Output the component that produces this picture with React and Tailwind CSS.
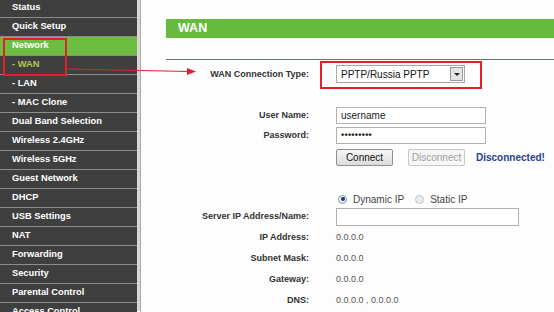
import React from "react";

const menu = [
  { label: "Status" },
  { label: "Quick Setup" },
  { label: "Network", active: true },
  { label: "- WAN", sub: true, current: true },
  { label: "- LAN", sub: true },
  { label: "- MAC Clone", sub: true },
  { label: "Dual Band Selection" },
  { label: "Wireless 2.4GHz" },
  { label: "Wireless 5GHz" },
  { label: "Guest Network" },
  { label: "DHCP" },
  { label: "USB Settings" },
  { label: "NAT" },
  { label: "Forwarding" },
  { label: "Security" },
  { label: "Parental Control" },
  { label: "Access Control" },
];

function Row({ label, children, className = "" }) {
  return (
    <div className={`flex items-center ${className}`}>
      <div className="w-[143px] shrink-0 text-right text-[9px] font-bold text-[#333]">{label}</div>
      <div className="ml-[27px] flex items-center">{children}</div>
    </div>
  );
}

function Radio({ checked }) {
  return (
    <span
      className={`flex h-[9px] w-[9px] items-center justify-center rounded-full border ${
        checked ? "border-[#8a9bb0] bg-[#e8eef5]" : "border-[#c4c4c4] bg-[#ececec]"
      }`}
    >
      {checked && <span className="h-[4px] w-[4px] rounded-full bg-[#1d3a70]" />}
    </span>
  );
}

export default function App() {
  return (
    <div
      className="relative flex h-[312px] w-[554px] overflow-hidden bg-[#fdfdfd]"
      style={{ fontFamily: '"Liberation Sans", Arial, sans-serif' }}
    >
      {/* left menu */}
      <div className="h-full shrink-0 border-r border-[#a9a9a9]">
        <div className="h-full w-[140px] border-r-[3px] border-[#d6d6d6] bg-[#3f3f3f]">
          <div className="-mt-[1px]">
            {menu.map((m) => (
              <div
                key={m.label}
                className={`flex h-[19px] items-center border-b border-[#8d8d8d] pl-[12px] text-[9.3px] font-bold ${
                  m.active ? "bg-[#6cbd40] text-white" : "bg-[#3f3f3f]"
                } ${m.current ? "text-[#b7c84a]" : m.active ? "" : "text-white"}`}
              >
                {m.label}
              </div>
            ))}
          </div>
        </div>
      </div>

      {/* content */}
      <div className="flex-1 pl-[25px] pt-[19px]">
        <div className="flex h-[19px] items-center bg-[#67bb3c] pl-[12px] text-[12.5px] font-bold text-white">WAN</div>
        <div className="mt-[21px] h-[1px] bg-[#65756f]" />

        <Row label="WAN Connection Type:" className="mt-[1px]">
          <div className="-ml-[16px] border-2 border-[#e2202b] pb-[4px] pl-[14px] pr-[15px] pt-[2px]">
            <div className="flex h-[18px] w-[129px] items-center border border-[#a8a8a8] bg-white pl-[4px] text-[10px] text-[#111]">
              <span className="flex-1">PPTP/Russia PPTP</span>
              <span className="mr-[1px] flex h-[14px] w-[13px] items-center justify-center border border-[#9a9a9a] bg-[#e4e4e4]">
                <span className="h-0 w-0 border-x-[3px] border-t-[3px] border-x-transparent border-t-[#222]" />
              </span>
            </div>
          </div>
        </Row>

        <Row label="User Name:" className="mt-[18px] h-[17px]">
          <div className="flex h-[17px] w-[150px] items-center border border-[#b0b0b0] bg-white pl-[4px] text-[10px] text-[#222]">
            username
          </div>
        </Row>
        <Row label="Password:" className="mt-[3px] h-[17px]">
          <div className="flex h-[17px] w-[150px] items-center border border-[#b0b0b0] bg-white pl-[4px] text-[9px] font-bold tracking-[0.3px] text-[#222]">
            •••••••••
          </div>
        </Row>
        <Row label="" className="mt-[5px] h-[17px]">
          <div className="flex h-[17px] w-[57px] items-center justify-center rounded-[2px] border border-[#8e8e8e] bg-gradient-to-b from-[#f6f6f6] to-[#dcdcdc] text-[10px] text-[#111]">
            Connect
          </div>
          <div className="ml-[15px] flex h-[17px] w-[57px] items-center justify-center rounded-[2px] border border-[#c8c8c8] bg-[#f7f7f7] text-[10px] text-[#9c9c9c]">
            Disconnect
          </div>
          <span className="ml-[11px] text-[10px] font-bold text-[#1f3f8c]">Disconnected!</span>
        </Row>

        <Row label="" className="mt-[27px] h-[12px]">
          <div className="ml-[2px] flex items-center text-[10px] text-[#444]">
            <Radio checked />
            <span className="ml-[6px]">Dynamic IP</span>
            <span className="ml-[11px]">
              <Radio />
            </span>
            <span className="ml-[6px]">Static IP</span>
          </div>
        </Row>
        <Row label="Server IP Address/Name:" className="mt-[3px] h-[18px]">
          <div className="h-[18px] w-[183px] border border-[#b0b0b0] bg-white" />
        </Row>

        <Row label="IP Address:" className="mt-[1px] h-[21px]">
          <span className="text-[9px] text-[#555]">0.0.0.0</span>
        </Row>
        <Row label="Subnet Mask:" className="h-[21px]">
          <span className="text-[9px] text-[#555]">0.0.0.0</span>
        </Row>
        <Row label="Gateway:" className="h-[21px]">
          <span className="text-[9px] text-[#555]">0.0.0.0</span>
        </Row>
        <Row label="DNS:" className="h-[21px]">
          <span className="text-[9px] text-[#555]">0.0.0.0 , 0.0.0.0</span>
        </Row>
      </div>

      {/* annotation: red box over Network / - WAN */}
      <div className="pointer-events-none absolute left-[3px] top-[38px] h-[38px] w-[64px] border-2 border-[#e2202b]" />

      {/* annotation: arrow */}
      <svg className="pointer-events-none absolute left-0 top-0" width="554" height="312">
        <line x1="67" y1="69" x2="189" y2="71.5" stroke="#e2202b" strokeWidth="1" />
        <polygon points="187,68 196,71.5 187,75" fill="#e2202b" />
      </svg>
    </div>
  );
}
